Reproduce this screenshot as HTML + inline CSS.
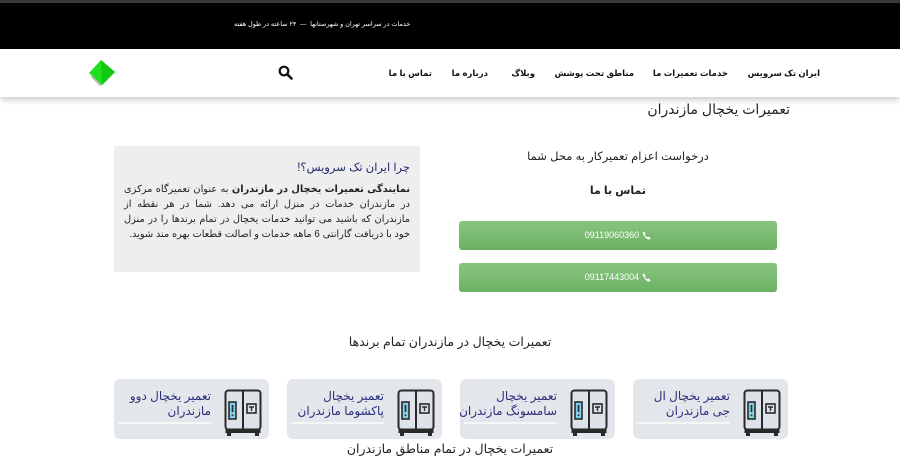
<!DOCTYPE html>
<html><head><meta charset="utf-8">
<style>
*{margin:0;padding:0;box-sizing:border-box}
body{width:900px;height:453px;overflow:hidden;background:#fff;font-family:"Liberation Sans","DejaVu Sans",sans-serif;position:relative;direction:rtl}
.abs{position:absolute}
.top{left:0;top:0;width:900px;height:49px;background:#000;border-top:3px solid #3a3a3a}
.nav{left:0;top:49px;width:900px;height:48px;background:#fff;box-shadow:0 3px 6px rgba(0,0,0,.2)}
.nav span{position:absolute;top:19px;font-size:8.5px;font-weight:bold;color:#111;white-space:nowrap}
.gbox{left:114px;top:146px;width:306px;height:126px;background:#eeeeee}
.btn{left:459px;width:318px;height:29px;border-radius:3px;background:linear-gradient(#88c57f,#6cb163);color:#fff;font-size:9px;line-height:29px;display:flex;justify-content:center;align-items:center;gap:3px}
.card{top:379px;width:155px;height:60px;background:#e3e6ea;border-radius:6px}
.card .t{position:absolute;right:58px;top:10px;font-size:12px;line-height:15px;color:#2b2f7c;text-align:right;white-space:nowrap}
.card .l{position:absolute;left:4px;right:58px;top:43px;height:2px;background:#f5f6f8}
.card svg{position:absolute;right:7px;top:10px}
</style></head><body>
<div class="abs top"></div>
<div class="abs" style="left:234px;top:20px;font-size:6.5px;color:#fff;white-space:nowrap">خدمات در سراسر تهران و شهرستانها &nbsp;—&nbsp; ۲۴ ساعته در طول هفته</div>
<div class="abs nav">
<span style="right:80px">ایران تک سرویس</span>
<span style="right:172px">خدمات تعمیرات ما</span>
<span style="right:266px">مناطق تحت پوشش</span>
<span style="right:365px">وبلاگ</span>
<span style="right:412px">درباره ما</span>
<span style="right:468px">تماس با ما</span>
<svg class="abs" style="left:278px;top:16px" width="15" height="15" viewBox="0 0 15 15"><circle cx="6" cy="6" r="4.3" fill="none" stroke="#111" stroke-width="2.2"/><path d="M9.2 9.2L13.5 13.5" stroke="#111" stroke-width="2.6" stroke-linecap="round"/></svg>
<svg class="abs" style="left:84px;top:9px" width="34" height="32" viewBox="0 0 34 32"><path d="M6 18 L16 28 L24 22 Z" fill="#888" opacity=".6"/><path d="M17 2 L31 14 L18 27 L5 15 Z" fill="#1ee01e"/><path d="M17 2 L31 14 L18 27 Z" fill="#12c812"/></svg>
</div>
<div class="abs" style="right:110px;top:101px;font-size:14px;color:#222">تعمیرات یخچال مازندران</div>
<div class="abs gbox"></div>
<div class="abs" style="right:490px;top:160px;font-size:11.5px;color:#22276e">چرا ایران تک سرویس؟!</div>
<div class="abs" style="left:124px;top:182px;width:286px;font-size:9.8px;line-height:15px;color:#222;text-align:justify"><b>نمایندگی تعمیرات یخچال در مازندران</b> به عنوان تعمیرگاه مرکزی در مازندران خدمات در منزل ارائه می دهد. شما در هر نقطه از مازندران که باشید می توانید خدمات یخچال در تمام برندها را در منزل خود با دریافت گارانتی 6 ماهه خدمات و اصالت قطعات بهره مند شوید.</div>
<div class="abs" style="left:459px;width:318px;top:149px;text-align:center;font-size:11.5px;color:#222">درخواست اعزام تعمیرکار به محل شما</div>
<div class="abs" style="left:459px;width:318px;top:184px;text-align:center;font-size:11px;font-weight:bold;color:#222">تماس با ما</div>
<div class="abs btn" style="top:221px;direction:ltr"><span>09119060360</span><svg width="9" height="9" viewBox="0 0 10 10"><path d="M2 0.5L4 2.8 3 4.2Q4.5 6.5 5.8 7L7.2 6 9.5 8 8.5 9.5Q4 10 0.5 1.5Z" fill="#fff"/></svg></div>
<div class="abs btn" style="top:263px;direction:ltr"><span>09117443004</span><svg width="9" height="9" viewBox="0 0 10 10"><path d="M2 0.5L4 2.8 3 4.2Q4.5 6.5 5.8 7L7.2 6 9.5 8 8.5 9.5Q4 10 0.5 1.5Z" fill="#fff"/></svg></div>
<div class="abs" style="left:0;width:900px;top:334px;text-align:center;font-size:12.5px;color:#222">تعمیرات یخچال در مازندران تمام برندها</div>
<svg width="0" height="0" style="position:absolute"><defs><g id="fr"><rect x="1.5" y="1.5" width="35" height="39" rx="3" fill="#dde3e8" stroke="#2a2a2a" stroke-width="2"/><path d="M19 1.5V40.5" stroke="#2a2a2a" stroke-width="2"/><rect x="5" y="13" width="7" height="17" fill="#7fd0e8" stroke="#2a2a2a" stroke-width="1.6"/><path d="M8.5 16v7M8.5 25.5v1.5" stroke="#2a2a2a" stroke-width="1.6"/><rect x="23" y="15" width="9" height="9" fill="#dde3e8" stroke="#2a2a2a" stroke-width="1.6"/><path d="M25 18h5M27.5 18v4" stroke="#2a2a2a" stroke-width="1.4"/><rect x="1.5" y="40" width="35" height="4" fill="#2a2a2a"/><rect x="3" y="44" width="4" height="3" fill="#2a2a2a"/><rect x="31" y="44" width="4" height="3" fill="#2a2a2a"/></g></defs></svg>
<div class="abs card" style="left:114px"><div class="t">تعمیر یخچال دوو<br>مازندران</div><div class="l"></div><svg width="38" height="48" viewBox="0 0 38 48"><use href="#fr"/></svg></div>
<div class="abs card" style="left:287px"><div class="t">تعمیر یخچال<br>پاکشوما مازندران</div><div class="l"></div><svg width="38" height="48" viewBox="0 0 38 48"><use href="#fr"/></svg></div>
<div class="abs card" style="left:460px"><div class="t">تعمیر یخچال<br>سامسونگ مازندران</div><div class="l"></div><svg width="38" height="48" viewBox="0 0 38 48"><use href="#fr"/></svg></div>
<div class="abs card" style="left:633px"><div class="t">تعمیر یخچال ال<br>جی مازندران</div><div class="l"></div><svg width="38" height="48" viewBox="0 0 38 48"><use href="#fr"/></svg></div>
<div class="abs" style="left:0;width:900px;top:441px;text-align:center;font-size:12.5px;color:#222">تعمیرات یخچال در تمام مناطق مازندران</div>
</body></html>
